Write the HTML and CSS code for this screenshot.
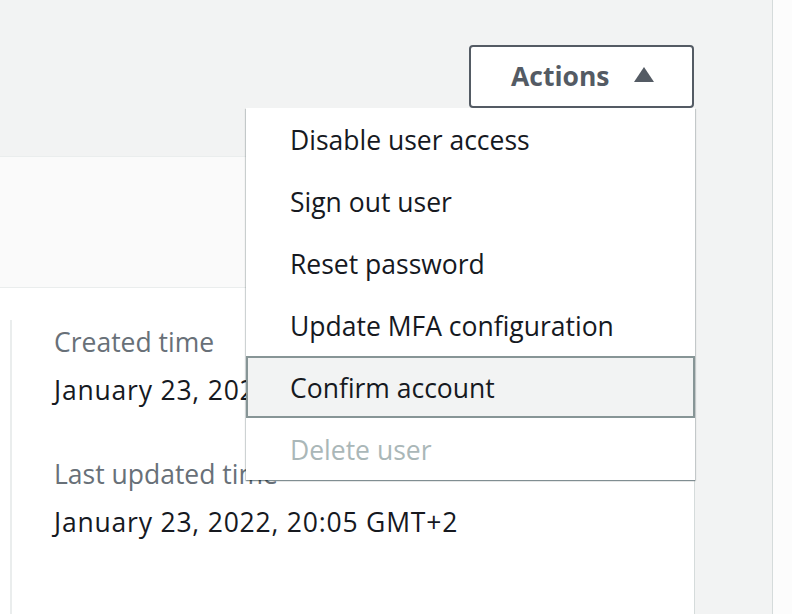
FILE: index.html
```html
<!DOCTYPE html>
<html lang="en">
<head>
<meta charset="utf-8">
<title>User details</title>
<link rel="stylesheet" href="styles.css">
</head>
<body>
<div class="app">
  <div class="content">
    <div class="header">
      <div class="actions">
        <button class="actions-btn" type="button">Actions <span class="caret"><svg width="20" height="15" viewBox="0 0 20 15"><path d="M10 0 L20 15 L0 15 Z" fill="#545b64"/></svg></span></button>
        <ul class="menu">
          <li class="item">Disable user access</li>
          <li class="item">Sign out user</li>
          <li class="item">Reset password</li>
          <li class="item">Update MFA configuration</li>
          <li class="item item-active">Confirm account</li>
          <li class="item item-disabled">Delete user</li>
        </ul>
      </div>
    </div>
    <div class="summary"></div>
    <div class="details">
      <div class="column">
        <div class="field">
          <div class="label">Created time</div>
          <div class="value">January 23, 2022, 20:05 GMT+2</div>
        </div>
        <div class="field">
          <div class="label">Last updated time</div>
          <div class="value">January 23, 2022, 20:05 GMT+2</div>
        </div>
      </div>
    </div>
  </div>
  <div class="side"></div>
  <div class="rail"></div>
</div>
</body>
</html>
```

FILE: styles.css
```css
* { box-sizing: border-box; }
html, body {
  margin: 0;
  padding: 0;
}
body {
  width: 792px;
  height: 614px;
  overflow: hidden;
  background: #f2f3f3;
  font-family: "Open Sans", "Noto Sans", sans-serif;
  color: #16191f;
}
.app {
  display: flex;
  height: 614px;
}
.content {
  width: 695px;
  display: flex;
  flex-direction: column;
}
.side {
  width: 78px;
  background: #f2f3f3;
  border-right: 1px solid #d5dbdb;
}
.rail {
  flex: 1;
  background: #fcfcfc;
}
.header {
  height: 156px;
  background: #f2f3f3;
  display: flex;
  justify-content: flex-end;
  align-items: flex-start;
  padding-top: 45px;
  padding-right: 1px;
}
.actions {
  position: relative;
}
.actions-btn {
  width: 225px;
  height: 63px;
  border: 2px solid #545b64;
  border-radius: 4px;
  background: #ffffff;
  color: #545b64;
  font-family: inherit;
  font-weight: 700;
  font-size: 26.5px;
  display: flex;
  align-items: center;
  justify-content: flex-start;
  gap: 24px;
  padding: 0 0 2px 40px;
}
.caret {
  display: flex;
  margin-top: -2px;
}
.menu {
  position: absolute;
  top: 100%;
  right: -1px;
  width: 449px;
  margin: 0;
  padding: 0;
  list-style: none;
  background: #ffffff;
  box-shadow: 0 1px 1px 0 rgba(0, 28, 36, 0.3), 1px 1px 1px 0 rgba(0, 28, 36, 0.15), -1px 1px 1px 0 rgba(0, 28, 36, 0.15);
  z-index: 2;
}
.item {
  height: 62px;
  display: flex;
  align-items: center;
  padding-left: 42px;
  padding-top: 2px;
  font-size: 26.5px;
  color: #16191f;
  border: 2px solid transparent;
}
.item-active {
  background: #f2f3f3;
  border-color: #879596;
}
.item-disabled {
  color: #aab7b8;
}
.summary {
  height: 132px;
  background: #fafafa;
  border-top: 1px solid #eaeded;
  border-bottom: 1px solid #eaeded;
  border-right: 1px solid #d5dbdb;
}
.details {
  flex: 1;
  background: #ffffff;
  border-right: 1px solid #d5dbdb;
  padding-top: 32px;
}
.column {
  margin-left: 10px;
  border-left: 2px solid #eaeded;
  padding-left: 42px;
  height: 100%;
}
.field + .field {
  margin-top: 40px;
}
.label {
  font-size: 26.5px;
  line-height: 44px;
  color: #687078;
}
.value {
  font-size: 26.5px;
  line-height: 44px;
  margin-top: 4px;
  letter-spacing: 0.8px;
  color: #16191f;
}
```
